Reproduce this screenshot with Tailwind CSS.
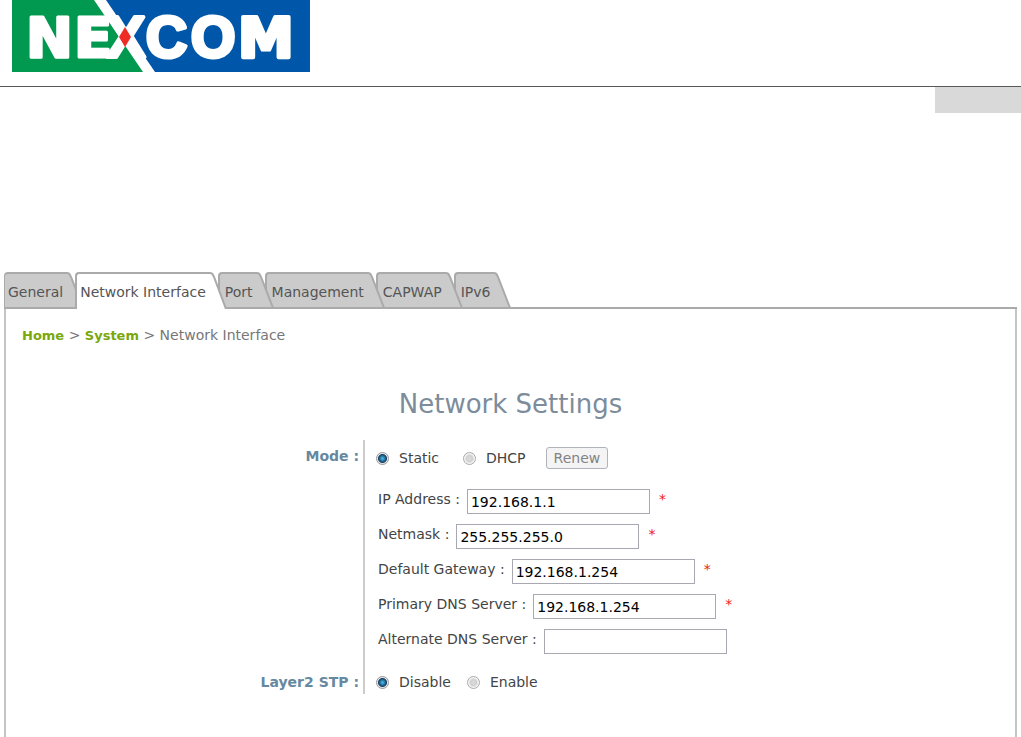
<!DOCTYPE html>
<html lang="en">
<head>
<meta charset="utf-8">
<meta name="viewport" content="width=device-width, initial-scale=1">
<title>Network Settings</title>
<script src="https://cdn.jsdelivr.net/npm/@tailwindcss/browser@4"></script>
</head>
<body class="min-h-screen flex flex-col bg-white font-['DejaVu_Sans',sans-serif] text-sm text-[#444]">
<header>
  <div class="pl-3 pb-[14px] border-b border-[#58585a]">
    <svg class="block" width="298" height="72" viewBox="12 0 298 72" role="img" aria-label="NEXCOM">
      <rect x="12" width="298" height="72" fill="#0056a8"/>
      <path d="M12 0H100L149 72H12Z" fill="#00994f"/>
      <path d="M94 0H106L155 72H143Z" fill="#fff"/>
      <text y="57" font-family="DejaVu Sans, sans-serif" font-weight="700" font-size="56" fill="#fff" stroke="#fff" stroke-width="3" stroke-linejoin="round"><tspan x="26 74">NE</tspan><tspan x="107 146 191" font-family="Liberation Sans, sans-serif" font-size="57" stroke-width="4">XCO</tspan><tspan x="238" stroke-width="4">M</tspan></text>
      <path d="M125 27L131 37L125 47L119 37Z" fill="#ee2d24"/>
    </svg>
  </div>
  <div class="ml-auto w-[86px] h-[26px] bg-[#d9d9d9]"></div>
</header>

<main class="flex-1 flex flex-col mt-[159px] ml-1 mr-1">
  <nav class="flex h-[37px] border-b-2 border-[#aaa] text-[#555] leading-9" aria-label="Sections">
    <a href="#" class="relative z-10 flex h-[37px] -mr-[9px]">
      <span class="h-[37px] pl-[3px] pr-1 rounded-tl-[4px] border-l border-t-2 border-b-2 border-[#aaa] bg-[#cbcbcb]">General</span>
      <svg class="block shrink-0" width="17" height="37"><path d="M0 1C3 1 3 3 4 5L16 36H0Z" fill="#cbcbcb"/><path d="M0 1C3 1 3 3 4 5L16 36H0" fill="none" stroke="#aaa" stroke-width="2"/></svg>
    </a>
    <a href="#" aria-current="page" class="relative z-50 flex h-[37px] -mr-[9px]">
      <span class="h-[37px] pl-[3px] pr-1 rounded-tl-[4px] border-l-2 border-t-2 border-[#aaa] bg-white">Network Interface</span>
      <svg class="block shrink-0" width="17" height="37"><path d="M0 1C3 1 3 3 4 5L16 37H0Z" fill="#fff"/><path d="M0 1C3 1 3 3 4 5L16 37" fill="none" stroke="#aaa" stroke-width="2"/></svg>
    </a>
    <a href="#" class="relative z-40 flex h-[37px] -mr-[9px]">
      <span class="h-[37px] pl-[5px] pr-1 rounded-tl-[4px] border-l-2 border-t-2 border-b-2 border-[#aaa] bg-[#cbcbcb]">Port</span>
      <svg class="block shrink-0" width="17" height="37"><path d="M0 1C3 1 3 3 4 5L16 36H0Z" fill="#cbcbcb"/><path d="M0 1C3 1 3 3 4 5L16 36H0" fill="none" stroke="#aaa" stroke-width="2"/></svg>
    </a>
    <a href="#" class="relative z-30 flex h-[37px] -mr-[9px]">
      <span class="h-[37px] pl-[5px] pr-1 rounded-tl-[4px] border-l-2 border-t-2 border-b-2 border-[#aaa] bg-[#cbcbcb]">Management</span>
      <svg class="block shrink-0" width="17" height="37"><path d="M0 1C3 1 3 3 4 5L16 36H0Z" fill="#cbcbcb"/><path d="M0 1C3 1 3 3 4 5L16 36H0" fill="none" stroke="#aaa" stroke-width="2"/></svg>
    </a>
    <a href="#" class="relative z-20 flex h-[37px] -mr-[9px]">
      <span class="h-[37px] pl-[5px] pr-1 rounded-tl-[4px] border-l-2 border-t-2 border-b-2 border-[#aaa] bg-[#cbcbcb]">CAPWAP</span>
      <svg class="block shrink-0" width="17" height="37"><path d="M0 1C3 1 3 3 4 5L16 36H0Z" fill="#cbcbcb"/><path d="M0 1C3 1 3 3 4 5L16 36H0" fill="none" stroke="#aaa" stroke-width="2"/></svg>
    </a>
    <a href="#" class="relative z-10 flex h-[37px]">
      <span class="h-[37px] pl-[5px] pr-1 rounded-tl-[4px] border-l-2 border-t-2 border-b-2 border-[#aaa] bg-[#cbcbcb]">IPv6</span>
      <svg class="block shrink-0" width="17" height="37"><path d="M0 1C3 1 3 3 4 5L16 36H0Z" fill="#cbcbcb"/><path d="M0 1C3 1 3 3 4 5L16 36H0" fill="none" stroke="#aaa" stroke-width="2"/></svg>
    </a>
  </nav>

  <div class="flex-1 border-l-2 border-r-2 border-[#c4c4c4]">
    <p class="pt-4 pl-4 leading-5 text-[#777]"><a href="#" class="text-[13px] font-bold text-[#7aa80b]">Home</a> &gt; <a href="#" class="text-[13px] font-bold text-[#7aa80b]">System</a> &gt; Network Interface</p>
    <h1 class="mt-10 text-center text-[26px] leading-9 text-[#7d8c9b]">Network Settings</h1>
    <form class="mt-[18px] grid grid-cols-[359px_1fr]">
      <div class="pr-1 pt-1 flex flex-col justify-between text-right font-bold leading-6 text-[#6688a0] border-r-2 border-[#ccc]">
        <span id="mode">Mode :</span>
        <span id="stp">Layer2 STP :</span>
      </div>
      <div class="pl-[11px]">
        <div class="flex items-center h-9" role="radiogroup" aria-labelledby="mode">
          <input id="static" name="mode" type="radio" checked class="appearance-none size-[13px] rounded-full border border-[#999] bg-[#eee] bg-[radial-gradient(circle,#4cc3ee_0,#123f66_4px,#e8e8e8_5px)]">
          <label for="static" class="ml-[10px]">Static</label>
          <input id="dhcp" name="mode" type="radio" class="ml-6 appearance-none size-[13px] rounded-full border border-[#aaa] bg-[radial-gradient(circle,#ddd_0,#d0d0d0_3px,#f4f4f4_5px)]">
          <label for="dhcp" class="ml-[10px]">DHCP</label>
          <button type="button" disabled class="ml-5 h-[22px] px-[7px] leading-5 rounded-[3px] border border-[#b0b4b8] bg-[#f4f4f4] text-[#838383]">Renew</button>
        </div>
        <div class="mt-[13px] pl-[2px] flex flex-col gap-[10px]">
          <div class="flex h-[25px] leading-5"><label for="ip">IP Address :</label><input id="ip" value="192.168.1.1" class="ml-[7px] w-[183px] h-[25px] px-[3px] border border-[#a8a8b2] text-black"><span class="ml-[9px] text-[#f02020]">*</span></div>
          <div class="flex h-[25px] leading-5"><label for="mask">Netmask :</label><input id="mask" value="255.255.255.0" class="ml-[7px] w-[183px] h-[25px] px-[3px] border border-[#a8a8b2] text-black"><span class="ml-[9px] text-[#f02020]">*</span></div>
          <div class="flex h-[25px] leading-5"><label for="gw">Default Gateway :</label><input id="gw" value="192.168.1.254" class="ml-[7px] w-[183px] h-[25px] px-[3px] border border-[#a8a8b2] text-black"><span class="ml-[9px] text-[#f02020]">*</span></div>
          <div class="flex h-[25px] leading-5"><label for="dns1">Primary DNS Server :</label><input id="dns1" value="192.168.1.254" class="ml-[7px] w-[183px] h-[25px] px-[3px] border border-[#a8a8b2] text-black"><span class="ml-[9px] text-[#f02020]">*</span></div>
          <div class="flex h-[25px] leading-5"><label for="dns2">Alternate DNS Server :</label><input id="dns2" class="ml-[7px] w-[183px] h-[25px] px-[3px] border border-[#a8a8b2] text-black"></div>
        </div>
        <div class="mt-4 flex items-center h-6" role="radiogroup" aria-labelledby="stp">
          <input id="off" name="stp" type="radio" checked class="appearance-none size-[13px] rounded-full border border-[#999] bg-[#eee] bg-[radial-gradient(circle,#4cc3ee_0,#123f66_4px,#e8e8e8_5px)]">
          <label for="off" class="ml-[10px]">Disable</label>
          <input id="on" name="stp" type="radio" class="ml-4 appearance-none size-[13px] rounded-full border border-[#aaa] bg-[radial-gradient(circle,#ddd_0,#d0d0d0_3px,#f4f4f4_5px)]">
          <label for="on" class="ml-[10px]">Enable</label>
        </div>
      </div>
    </form>
  </div>
</main>
</body>
</html>
